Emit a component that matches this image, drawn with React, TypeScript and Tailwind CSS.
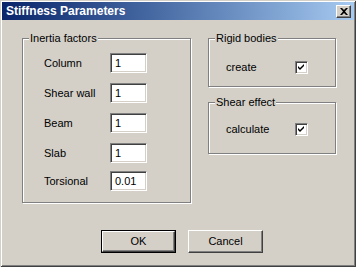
import React from "react";

const font = { fontFamily: '"Liberation Sans", Arial, sans-serif' };

function Input({ value }: { value: string }) {
  return (
    <div className="w-[37px] h-[20px] bg-white border border-t-[#808080] border-l-[#808080] border-b-white border-r-white shadow-[inset_1px_1px_#404040,inset_-1px_-1px_#d4d0c8] flex items-center pl-[4px] text-[11px] text-black">
      {value}
    </div>
  );
}

function Check() {
  return (
    <div className="w-[13px] h-[13px] bg-white border border-t-[#808080] border-l-[#808080] border-b-white border-r-white shadow-[inset_1px_1px_#404040,inset_-1px_-1px_#d4d0c8] flex items-center justify-center">
      <svg width="7" height="7" viewBox="0 0 7 7">
        <path d="M0 2 L2 4 L6 0 L6 2 L2 6 L0 4 Z" fill="#000" />
      </svg>
    </div>
  );
}

function Group({
  title,
  className,
  children,
}: {
  title: string;
  className: string;
  children: React.ReactNode;
}) {
  return (
    <div
      className={`relative border border-[#808080] shadow-[inset_1px_1px_#fff,1px_1px_#fff] ${className}`}
    >
      <span className="absolute top-[-8px] left-[6px] bg-[#d4d0c8] px-[1px] text-[11px] leading-[14px] text-black">
        {title}
      </span>
      {children}
    </div>
  );
}

function Row({ label, value, mt }: { label: string; value: string; mt: string }) {
  return (
    <div className={`flex items-center ${mt}`}>
      <div className="w-[66px] text-[11px] text-black">{label}</div>
      <Input value={value} />
    </div>
  );
}

export default function App() {
  return (
    <div
      style={font}
      className="w-[356px] h-[267px] bg-[#d4d0c8] flex flex-col shadow-[inset_1px_1px_#d4d0c8,inset_-1px_-1px_#404040,inset_2px_2px_#fff,inset_-2px_-2px_#808080] overflow-hidden"
    >
      <div className="mx-[2px] mt-[2px] h-[18px] bg-gradient-to-r from-[#0a246a] to-[#a6caf0] flex items-center justify-between">
        <span className="pl-[4px] text-[12px] font-bold text-white leading-none">
          Stiffness Parameters
        </span>
        <div className="mr-[3px] w-[15px] h-[13px] bg-[#d4d0c8] border border-t-white border-l-white border-b-[#404040] border-r-[#404040] shadow-[inset_-1px_-1px_#808080] flex items-center justify-center">
          <svg width="8" height="7" viewBox="0 0 8 7">
            <path
              d="M0 0 H2 L4 2 L6 0 H8 L5 3.5 L8 7 H6 L4 5 L2 7 H0 L3 3.5 Z"
              fill="#000"
            />
          </svg>
        </div>
      </div>

      <div className="flex pl-[22px] pt-[18px]">
        <Group title="Inertia factors" className="w-[169px] h-[165px]">
          <div className="flex flex-col pl-[21px] pt-[14px]">
            <Row label="Column" value="1" mt="mt-0" />
            <Row label="Shear wall" value="1" mt="mt-[10px]" />
            <Row label="Beam" value="1" mt="mt-[10px]" />
            <Row label="Slab" value="1" mt="mt-[10px]" />
            <Row label="Torsional" value="0.01" mt="mt-[8px]" />
          </div>
        </Group>

        <div className="ml-[17px] flex flex-col">
          <Group title="Rigid bodies" className="w-[128px] h-[49px]">
            <div className="flex items-center pl-[17px] pt-[20px]">
              <div className="w-[69px] text-[11px] text-black">create</div>
              <Check />
            </div>
          </Group>
          <Group title="Shear effect" className="w-[128px] h-[52px] mt-[15px]">
            <div className="flex items-center pl-[17px] pt-[18px]">
              <div className="w-[69px] text-[11px] text-black">calculate</div>
              <Check />
            </div>
          </Group>
        </div>
      </div>

      <div className="flex pl-[101px] mt-[27px] gap-[12px]">
        <div className="w-[75px] h-[23px] border border-black">
          <div className="w-full h-full border border-t-white border-l-white border-b-[#404040] border-r-[#404040] shadow-[inset_-1px_-1px_#808080] flex items-center justify-center text-[11px] text-black">
            OK
          </div>
        </div>
        <div className="w-[75px] h-[23px] border border-t-white border-l-white border-b-[#404040] border-r-[#404040] shadow-[inset_-1px_-1px_#808080] flex items-center justify-center text-[11px] text-black">
          Cancel
        </div>
      </div>
    </div>
  );
}
